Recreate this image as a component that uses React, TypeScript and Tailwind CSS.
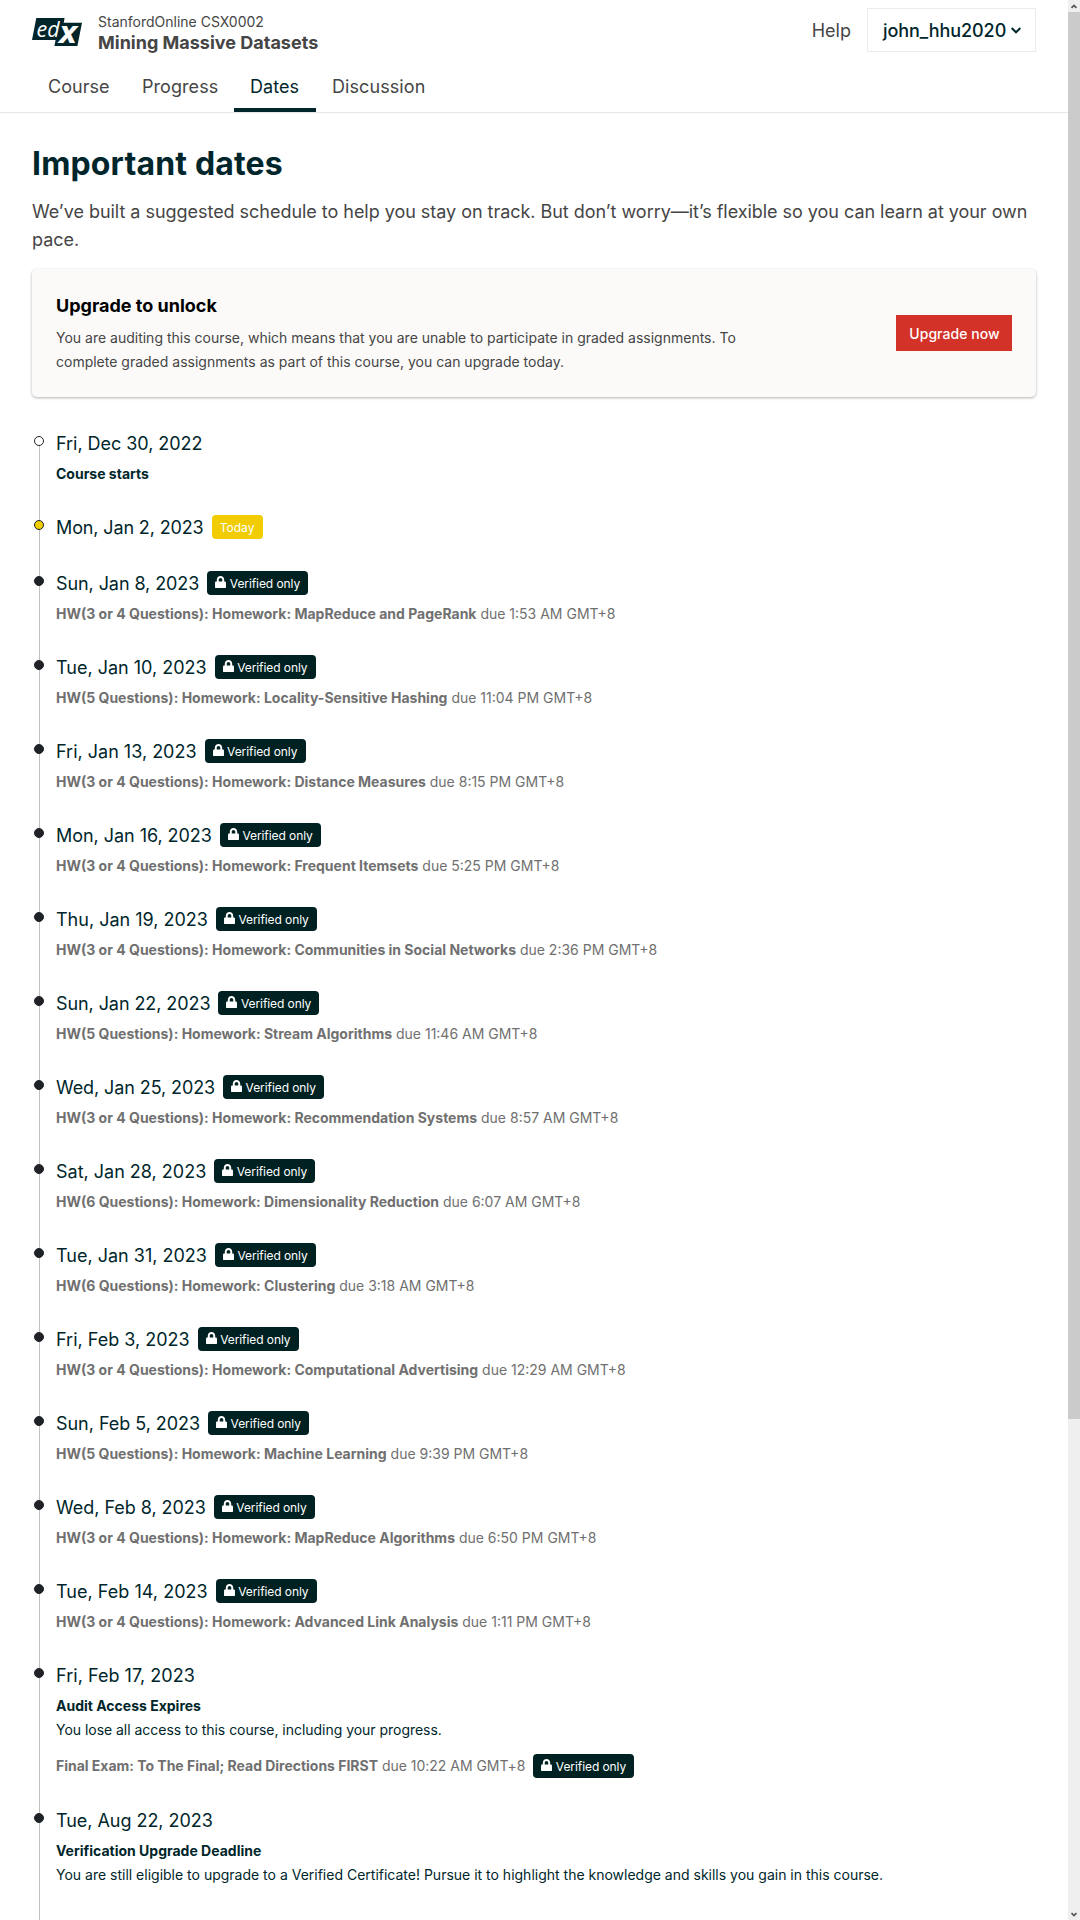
import React from "react";

type Entry = {
  date: string;
  title?: string;
  due?: string;
  tracking?: string;
};

const homework: Entry[] = [
  { date: "Sun, Jan 8, 2023", tracking: "tracking-[-0.08px]", title: "HW(3 or 4 Questions): Homework: MapReduce and PageRank", due: "due 1:53 AM GMT+8" },
  { date: "Tue, Jan 10, 2023", title: "HW(5 Questions): Homework: Locality-Sensitive Hashing", due: "due 11:04 PM GMT+8" },
  { date: "Fri, Jan 13, 2023", title: "HW(3 or 4 Questions): Homework: Distance Measures", due: "due 8:15 PM GMT+8" },
  { date: "Mon, Jan 16, 2023", tracking: "tracking-[-0.04px]", title: "HW(3 or 4 Questions): Homework: Frequent Itemsets", due: "due 5:25 PM GMT+8" },
  { date: "Thu, Jan 19, 2023", title: "HW(3 or 4 Questions): Homework: Communities in Social Networks", due: "due 2:36 PM GMT+8" },
  { date: "Sun, Jan 22, 2023", tracking: "tracking-[-0.08px]", title: "HW(5 Questions): Homework: Stream Algorithms", due: "due 11:46 AM GMT+8" },
  { date: "Wed, Jan 25, 2023", tracking: "tracking-[-0.1px]", title: "HW(3 or 4 Questions): Homework: Recommendation Systems", due: "due 8:57 AM GMT+8" },
  { date: "Sat, Jan 28, 2023", title: "HW(6 Questions): Homework: Dimensionality Reduction", due: "due 6:07 AM GMT+8" },
  { date: "Tue, Jan 31, 2023", title: "HW(6 Questions): Homework: Clustering", due: "due 3:18 AM GMT+8" },
  { date: "Fri, Feb 3, 2023", title: "HW(3 or 4 Questions): Homework: Computational Advertising", due: "due 12:29 AM GMT+8" },
  { date: "Sun, Feb 5, 2023", tracking: "tracking-[-0.04px]", title: "HW(5 Questions): Homework: Machine Learning", due: "due 9:39 PM GMT+8" },
  { date: "Wed, Feb 8, 2023", tracking: "tracking-[-0.04px]", title: "HW(3 or 4 Questions): Homework: MapReduce Algorithms", due: "due 6:50 PM GMT+8" },
  { date: "Tue, Feb 14, 2023", tracking: "tracking-[0.03px]", title: "HW(3 or 4 Questions): Homework: Advanced Link Analysis", due: "due 1:11 PM GMT+8" },
];

function Logo() {
  return (
    <svg width="50" height="28" viewBox="0 0 50 28" className="shrink-0 overflow-visible">
      <path d="M4.3 0H32.6L31.7 4.7H50L45.4 28H22.4L23.6 22H0Z" fill="#00262b" />
      <text x="4.600" y="19" fontFamily="Open Sans" fontSize="21" fontWeight="400" fontStyle="italic" fill="#fff" textLength="23" lengthAdjust="spacingAndGlyphs">ed</text>
      <text x="27" y="25.300" fontFamily="Open Sans" fontSize="31" fontWeight="700" fontStyle="italic" fill="#fff" textLength="18" lengthAdjust="spacingAndGlyphs">x</text>
    </svg>
  );
}

function VerifiedBadge() {
  return (
    <span className="ml-2 flex h-6 w-[101px] items-center whitespace-nowrap rounded bg-[#002121] pl-2 text-[12px] leading-6 tracking-[-0.08px] text-white">
      <svg viewBox="0 0 448 512" width="11" height="12.5" fill="currentColor" className="mr-[3.500px] -mt-0.5 shrink-0">
        <path d="M400 224h-24v-72C376 68.2 307.8 0 224 0S72 68.2 72 152v72H48c-26.500 0-48 21.500-48 48v192c0 26.500 21.500 48 48 48h352c26.500 0 48-21.500 48-48V272c0-26.500-21.500-48-48-48zm-104 0H152v-72c0-39.700 32.300-72 72-72s72 32.300 72 72v72z" />
      </svg>
      <span className="pt-0.5">Verified only</span>
    </span>
  );
}

function Item({
  date,
  tracking = "",
  dot = "bg-[#1f2226]",
  line = "top-0",
  badge,
  children,
}: {
  date: string;
  tracking?: string;
  dot?: string;
  line?: string;
  badge?: React.ReactNode;
  children?: React.ReactNode;
}) {
  return (
    <li className="relative pb-7 pl-6">
      <span className={`absolute bottom-0 left-[7px] w-px bg-[#bfbfbf] ${line}`} />
      <span className={`absolute left-[2px] top-[6px] size-[10px] rounded-full border border-[#1f2226] ${dot}`} />
      <div className="flex h-7 items-start text-[18px] leading-7 text-[#00262b]">
        <span className={tracking}>{date}</span>
        {badge && <div className="pt-px">{badge}</div>}
      </div>
      {children}
    </li>
  );
}

function ScrollBar() {
  return (
    <aside className="flex w-3 shrink-0 flex-col bg-[#efefef]">
      <div className="flex h-3 items-center justify-center">
        <svg width="6" height="5" viewBox="0 0 6 5" fill="none" stroke="#555" strokeWidth="1.7"><path d="M.5 4 3 1.500 5.500 4" /></svg>
      </div>
      <div className="h-[1407px] bg-[#cbcbcb]" />
      <div className="mt-auto flex h-3 items-center justify-center">
        <svg width="6" height="5" viewBox="0 0 6 5" fill="none" stroke="#555" strokeWidth="1.7"><path d="M.5 1 3 3.500 5.500 1" /></svg>
      </div>
    </aside>
  );
}

export default function App() {
  return (
    <div className="flex h-[1920px] w-[1080px] overflow-hidden bg-white font-['Inter',sans-serif] text-[#454545]">
      <div className="flex w-[1068px] flex-col">
        <header className="h-[113px] border-b border-[#e7e7e7]">
          <div className="flex h-[60px] px-8">
            <div className="pt-[18px]"><Logo /></div>
            <div className="ml-4 pt-3">
              <div className="text-[14px] leading-5">StanfordOnline CSX0002</div>
              <div className="text-[18px] font-bold leading-[21px]">Mining Massive Datasets</div>
            </div>
            <div className="ml-auto flex pt-2">
              <span className="mr-4 text-[18px] leading-[46px]">Help</span>
              <button className="flex h-11 w-[169px] items-center border border-[#ebebeb] pl-[15px] pt-0.5 text-[18px] font-medium leading-7 tracking-[-0.06px] text-[#00262b]">
                john_hhu2020
                <svg width="10" height="7" viewBox="0 0 10 7" fill="none" stroke="currentColor" strokeWidth="2" className="-mt-px ml-[5px] shrink-0"><path d="M.7 1 5 5.300 9.300 1" /></svg>
              </button>
            </div>
          </div>
          <nav className="flex h-[52px] pl-8 text-[18px] leading-[54px]">
            <a className="w-[94px] px-4 tracking-[0.05px]">Course</a>
            <a className="w-[108px] px-4 tracking-[0.06px]">Progress</a>
            <a className="w-[82px] border-b-4 border-[#00262b] px-4 tracking-[0.08px] text-[#00262b]">Dates</a>
            <a className="px-4 tracking-[0.08px]">Discussion</a>
          </nav>
        </header>
        <main className="px-8">
          <h1 className="mt-[33px] text-[32px] font-bold leading-9 tracking-[0.16px] text-[#00262b]">Important dates</h1>
          <p className="mt-4 text-[18px] leading-7 tracking-[-0.034px]">
            We’ve built a suggested schedule to help you stay on track. But don’t worry—it’s flexible so you can learn at your own pace.
          </p>
          <section className="mt-[15px] flex h-[128px] items-start justify-between rounded-[5px] bg-[#fbfaf9] px-6 shadow-[0_1px_3px_rgba(0,0,0,0.3)]">
            <div className="w-[700px] pt-[23px]">
              <h2 className="text-[18px] font-bold leading-7 text-black">Upgrade to unlock</h2>
              <p className="mt-1.5 text-[14px] leading-6">
                You are auditing this course, which means that you are unable to participate in graded assignments. To<br />
                complete graded assignments as part of this course, you can upgrade today.
              </p>
            </div>
            <button className="h-9 w-[116px] self-center bg-[#d23228] pl-px pt-0.5 text-[14px] font-medium leading-[34px] text-white"><span className="tracking-[0.05px]">Upgrade now</span></button>
          </section>
          <ul className="mt-[33px] text-[14px] leading-6">
            <Item date="Fri, Dec 30, 2022" tracking="tracking-[-0.04px]" dot="bg-white" line="top-[10px]">
              <div className="mt-1 font-bold text-[#00262b]">Course starts</div>
            </Item>
            <Item
              date="Mon, Jan 2, 2023"
              tracking="tracking-[-0.13px]"
              dot="bg-[#f0cc00]"
              badge={<span className="ml-2 block h-6 w-[51px] rounded bg-[#f0cc00] pt-px text-center text-[12px] leading-6 text-white">Today</span>}
            />
            {homework.map((e) => (
              <Item key={e.date} date={e.date} tracking={e.tracking} badge={<VerifiedBadge />}>
                <div className="mt-1 text-[#707070]"><b>{e.title}</b> {e.due}</div>
              </Item>
            ))}
            <Item date="Fri, Feb 17, 2023" tracking="tracking-[0.04px]">
              <div className="mt-1 font-bold text-[#00262b]">Audit Access Expires</div>
              <div className="tracking-[-0.03px] text-[#00262b]">You lose all access to this course, including your progress.</div>
              <div className="mb-px mt-3 flex text-[#707070]">
                <span className="tracking-[-0.02px]"><b>Final Exam: To The Final; Read Directions FIRST</b> due 10:22 AM GMT+8</span>
                <VerifiedBadge />
              </div>
            </Item>
            <Item date="Tue, Aug 22, 2023" tracking="tracking-[-0.04px]">
              <div className="mt-1 font-bold text-[#00262b]">Verification Upgrade Deadline</div>
              <div className="pb-8 text-[#00262b]">You are still eligible to upgrade to a Verified Certificate! Pursue it to highlight the knowledge and skills you gain in this course.</div>
            </Item>
          </ul>
        </main>
      </div>
      <ScrollBar />
    </div>
  );
}
